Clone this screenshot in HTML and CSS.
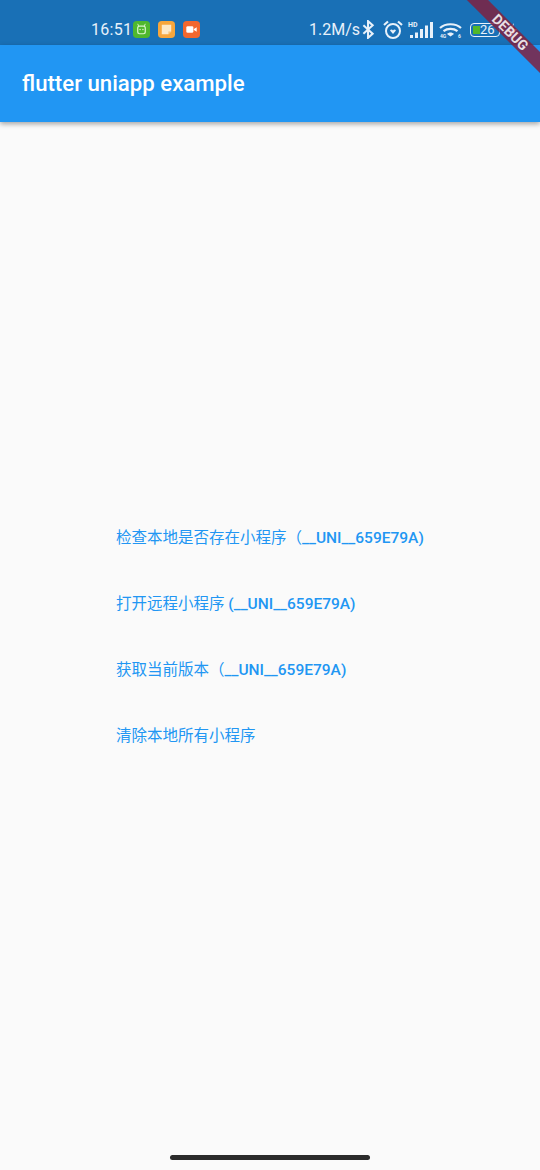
FILE: index.html

```html
<!DOCTYPE html>
<html lang="en">
<head>
  <meta charset="UTF-8" />
  <meta name="viewport" content="width=device-width, initial-scale=1.0" />
  <title>flutter uniapp example</title>
  <link rel="stylesheet" href="styles.css">
</head>
<body>
  <div class="screen">
    <div class="status-bar">
      <div class="status-left">
        <span class="clock">16:51</span>
        <svg class="app-icon" viewBox="0 0 18 18"><rect width="18" height="18" rx="4" fill="#4fb82e"/><rect x="5" y="5.500" width="8" height="8" rx="2" fill="none" stroke="#d8f5cc" stroke-width="1.300"/><path d="M6 5.500 5 3M12 5.500l1-2.500" stroke="#d8f5cc"/><circle cx="7.500" cy="9" r=".8" fill="#d8f5cc"/><circle cx="10.500" cy="9" r=".8" fill="#d8f5cc"/></svg>
        <svg class="app-icon" viewBox="0 0 18 18"><rect width="18" height="18" rx="4" fill="#f7a63c"/><path d="M4 4h10v7l-3 3H4z" fill="#fde9c8"/><path d="M14 11h-3v3z" fill="#f7c274"/></svg>
        <svg class="app-icon" viewBox="0 0 18 18"><rect width="18" height="18" rx="4" fill="#f2672e"/><rect x="3.500" y="5.500" width="7.500" height="7" rx="1.500" fill="#fff"/><path d="m11.500 8.500 3-2v5l-3-2z" fill="#fff"/></svg>
      </div>
      <div class="status-right">
        <span class="speed">1.2M/s</span>
        <svg class="bt-icon" viewBox="0 0 14 20"><path d="M1.500 5.500l10 9-5 4.500V1l5 4.500-10 9" fill="none" stroke="#e8f1fa" stroke-width="2.200"/></svg>
        <svg class="alarm-icon" viewBox="0 0 20 19"><circle cx="10" cy="11" r="7" fill="none" stroke="#e8f1fa" stroke-width="2"/><path d="M1 5 5 1.500M19 5 15 1.500" stroke="#e8f1fa" stroke-width="2.200"/><path d="M7 10.500c.8-1.500 2.300-1.200 3 0 .7-1.200 2.200-1.500 3 0L10 14z" fill="#e8f1fa"/></svg>
        <div class="signal">
          <span class="hd">HD</span>
          <svg class="bars" viewBox="0 0 23 16"><path d="M0 13h3v3H0zM5 10.500h3V16H5zM10 7h3v9h-3zM15 3.500h3V16h-3zM20 0h3v16h-3z" fill="#e8f1fa"/></svg>
        </div>
        <svg class="wifi-icon" viewBox="0 0 23 16"><path d="M1 6C6.500 1 16.500 1 22 6M4.500 9.200c4-3 10-3 14 0" fill="none" stroke="#e8f1fa" stroke-width="2.200"/><path d="M8 12c2-2 5-2 7 0l-3.500 2.500z" fill="#e8f1fa"/><text x="1" y="16" class="wifi-tag">4G</text><text x="19" y="16" class="wifi-tag">6</text></svg>
        <div class="battery">
          <span class="battery-fill"></span>
          <span class="battery-level">26</span>
        </div>
        <svg class="bolt" viewBox="0 0 10 16"><path d="M7 0 0 9h4l-1 7 7-10H5.500z" fill="#e8f1fa"/></svg>
      </div>
    </div>
    <header class="app-bar">
      <h1>flutter uniapp example</h1>
    </header>
    <main class="content">
      <div class="link-list">
        <a class="link">检查本地是否存在小程序（<span class="app-id">__UNI__659E79A)</span></a>
        <a class="link">打开远程小程序 <span class="app-id">(__UNI__659E79A)</span></a>
        <a class="link">获取当前版本（<span class="app-id">__UNI__659E79A)</span></a>
        <a class="link">清除本地所有小程序</a>
      </div>
    </main>
    <div class="home-indicator"><span></span></div>
    <div class="debug-banner"><span>DEBUG</span></div>
  </div>
</body>
</html>
```

FILE: styles.css

```css
* {
  box-sizing: border-box;
}
body {
  margin: 0;
  background: #fafafa;
  font-family: Roboto, "Noto Sans CJK SC", sans-serif;
}
.screen {
  position: relative;
  width: 540px;
  height: 1170px;
  overflow: hidden;
  display: flex;
  flex-direction: column;
}
.status-bar {
  height: 45px;
  flex: none;
  background: #1970b6;
  color: #e8f1fa;
  display: flex;
  justify-content: space-between;
  padding: 18px 0 0 91px;
}
.status-left,
.status-right {
  display: flex;
  align-items: flex-start;
}
.clock {
  width: 42px;
  font-size: 16px;
  line-height: 24px;
  letter-spacing: 0.3px;
}
.app-icon {
  width: 17px;
  height: 17px;
  margin: 3px 8px 0 0;
}
.status-right {
  width: 231px;
}
.speed {
  width: 53px;
  font-size: 16px;
  line-height: 24px;
}
.bt-icon {
  width: 13px;
  height: 19px;
  margin: 2px 0 0 0;
}
.alarm-icon {
  width: 20px;
  height: 19px;
  margin: 2px 0 0 8px;
}
.signal {
  position: relative;
  width: 25px;
  height: 20px;
  margin: 4px 0 0 5px;
}
.hd {
  position: absolute;
  left: 0;
  top: 0;
  font-size: 7px;
  line-height: 7px;
  font-weight: 700;
}
.bars {
  position: absolute;
  left: 2px;
  top: 0;
  width: 23px;
  height: 16px;
}
.wifi-icon {
  width: 23px;
  height: 16px;
  margin: 4px 0 0 6px;
}
.wifi-tag {
  fill: #e8f1fa;
  font-size: 5px;
  font-weight: 700;
}
.battery {
  position: relative;
  width: 30px;
  height: 14px;
  margin: 5px 0 0 8px;
  border: 1.5px solid #e8f1fa;
  border-radius: 4px;
}
.battery-fill {
  position: absolute;
  left: 1.500px;
  top: 1.500px;
  width: 7px;
  height: 8px;
  background: #52b82a;
}
.battery-level {
  position: absolute;
  left: 9px;
  top: -1.500px;
  font-size: 13px;
  line-height: 14px;
}
.bolt {
  width: 10px;
  height: 16px;
  margin: 5px 0 0 7px;
}
.app-bar {
  position: relative;
  z-index: 1;
  height: 77px;
  flex: none;
  background: #2196f3;
  box-shadow: 0 2px 5px rgba(0, 0, 0, 0.35);
  display: flex;
  align-items: center;
  padding: 0 0 2px 22px;
}
.app-bar h1 {
  margin: 0;
  color: #fff;
  font-size: 22.2px;
  font-weight: 500;
}
.content {
  flex: 1;
  padding: 406px 0 0 116px;
}
.link-list {
  display: flex;
  flex-direction: column;
  gap: 45px;
}
.link {
  color: #2196f3;
  font-size: 15.5px;
  line-height: 21px;
  white-space: nowrap;
}
.app-id {
  font-weight: 500;
}
.home-indicator {
  height: 26px;
  flex: none;
  display: flex;
  justify-content: center;
  padding-top: 11px;
}
.home-indicator span {
  width: 200px;
  height: 5px;
  border-radius: 3px;
  background: #2b2b2b;
}
.debug-banner {
  position: absolute;
  z-index: 2;
  top: 0;
  right: 0;
  width: 90px;
  height: 90px;
  overflow: hidden;
}
.debug-banner span {
  position: absolute;
  top: 25px;
  left: -10px;
  width: 140px;
  height: 15px;
  background: rgba(130, 30, 60, 0.82);
  color: rgba(255, 255, 255, 0.85);
  font-size: 14px;
  font-weight: 700;
  line-height: 15px;
  text-align: center;
  transform: rotate(45deg);
}
```
